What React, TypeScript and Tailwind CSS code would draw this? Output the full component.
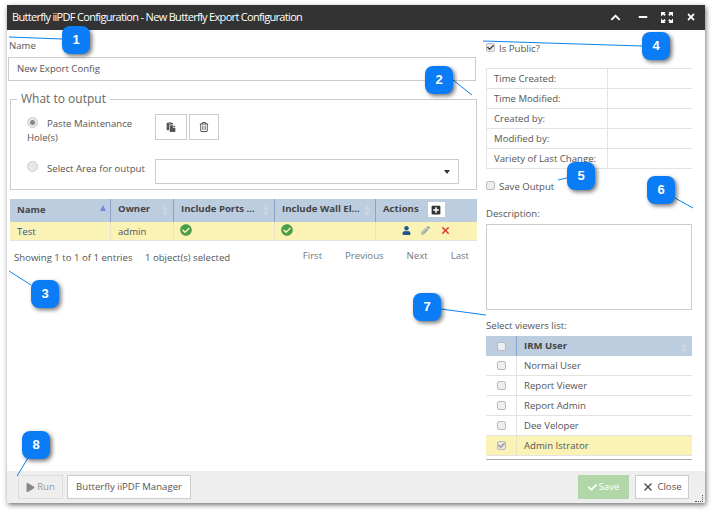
import { FaCheck, FaCheckCircle, FaChevronUp, FaMinus, FaPaste, FaPencilAlt, FaPlay, FaPlusSquare, FaTimes, FaUser } from "react-icons/fa";
import { FaRegTrashCan, FaXmark } from "react-icons/fa6";

const callouts = [
  { n: 1, cls: "left-[62px] top-[26px]" },
  { n: 2, cls: "left-[425px] top-[66px]" },
  { n: 3, cls: "left-[31px] top-[280px]" },
  { n: 4, cls: "left-[642px] top-[32px]" },
  { n: 5, cls: "left-[567px] top-[162px]" },
  { n: 6, cls: "left-[647px] top-[176px]" },
  { n: 7, cls: "left-[413px] top-[293px]" },
  { n: 8, cls: "left-[22px] top-[431px]" },
];

const leaders = [
  [9, 37, 62, 39],
  [453, 80, 472, 95],
  [9, 271, 31, 285],
  [483, 41, 642, 46],
  [558, 180, 567, 178],
  [675, 198, 693, 208],
  [441, 309, 486, 315],
  [17, 476, 28, 458],
];

function Check({ checked, dim }: { checked?: boolean; dim?: boolean }) {
  return (
    <span className={`flex h-[9px] w-[9px] shrink-0 items-center justify-center rounded-[2px] border border-[#bbb] ${dim ? "bg-[#e4e4e4]" : "bg-[#eee]"}`}>
      {checked && <FaCheck className={`text-[7px] ${dim ? "text-[#999]" : "text-[#444]"}`} />}
    </span>
  );
}

function Radio({ checked }: { checked?: boolean }) {
  return (
    <span className="flex h-[9px] w-[9px] box-content shrink-0 items-center justify-center rounded-full border border-[#ccc] bg-[#e8e8e8]">
      {checked && <span className="h-[5px] w-[5px] rounded-full bg-[#888]" />}
    </span>
  );
}

function SortArrows() {
  return (
    <span className="flex flex-col gap-[1px] pt-[2px]">
      <span className="h-0 w-0 border-x-[3px] border-b-[5px] border-x-transparent border-b-[#ccd5e0]" />
      <span className="h-0 w-0 border-x-[3px] border-t-[5px] border-x-transparent border-t-[#ccd5e0]" />
    </span>
  );
}

function HeadCell({ label, className }: { label: string; className: string }) {
  return (
    <div className={`flex items-center justify-between border-r border-[#8aa3c4] pb-[2px] pl-[7px] pr-[5px] font-bold text-[#444] ${className}`}>
      <span>{label}</span>
      <SortArrows />
    </div>
  );
}

function ExpandIcon() {
  return (
    <svg width="12" height="11" viewBox="0 0 12 11" fill="#fff">
      <path d="M0 0h4.5L3.4 1.2 4.8 2.6 3.4 4 2 2.6 1 3.6 0 4.5zM12 0H7.5l1.1 1.2L7.2 2.6 8.6 4 10 2.6l1 1 1 .9zM0 11h4.5L3.4 9.8l1.4-1.4L3.4 7 2 8.4l-1-1-1-.9zM12 11H7.5l1.1-1.2-1.4-1.4L8.6 7 10 8.4l1-1 1-.9z" />
    </svg>
  );
}

export default function App() {
  const info = ["Time Created:", "Time Modified:", "Created by:", "Modified by:", "Variety of Last Change:"];
  const viewers = ["Normal User", "Report Viewer", "Report Admin", "Dee Veloper"];

  return (
    <div className="relative h-[513px] w-[715px] overflow-hidden bg-white font-['Open_Sans',sans-serif] text-[9.6px] text-[#555]">
      <div className="ml-[7px] flex h-[498px] w-[698px] translate-y-[5px] flex-col bg-white shadow-[1px_2px_5px_rgba(0,0,0,0.55)]">
        <header className="flex h-[25px] shrink-0 items-center justify-between bg-[#333] pb-[1px] pl-[5px] pr-[9px] text-white">
          <span className="text-[11px] font-medium tracking-[-0.68px]">Butterfly iiPDF Configuration - New Butterfly Export Configuration</span>
          <div className="flex items-center gap-[13px] text-[10px]">
            <FaChevronUp className="mr-[4px] text-[11px]" />
            <FaMinus />
            <ExpandIcon />
            <FaTimes />
          </div>
        </header>

        <main className="flex min-h-0 flex-1">
          <section className="w-[479px] shrink-0 pl-[1px] pt-[9px]">
            <label className="mb-[5px] block pl-[1px] leading-[13px]">Name</label>
            <div className="flex h-[24px] w-[468px] items-center border border-[#ccc] pl-[8px]">New Export Config</div>

            <fieldset className="ml-[2px] mt-[9px] h-[100px] w-[467px] border border-[#ccc] pl-[16px]">
              <legend className="-ml-[10px] px-[4px] text-[12px] leading-[18px] text-[#666]">What to output</legend>
              <div className="flex h-[50px] gap-[8px] pt-[6px]">
                <div className="w-[120px] pt-[3px] leading-[14px]">
                  <div className="flex items-start gap-[9px]">
                    <Radio checked />
                    <span>Paste Maintenance</span>
                  </div>
                  <div>Hole(s)</div>
                </div>
                <div className="flex gap-[2px]">
                  <button className="flex h-[26px] w-[32px] items-center justify-center border border-[#ccc] text-[10px] text-[#555]">
                    <FaPaste />
                  </button>
                  <button className="flex h-[26px] w-[30px] items-center justify-center border border-[#ccc] text-[10px] text-[#555]">
                    <FaRegTrashCan />
                  </button>
                </div>
              </div>
              <div className="mt-[1px] flex items-start gap-[8px]">
                <div className="flex w-[120px] items-start gap-[9px] leading-[14px]">
                  <span className="pt-[2px]"><Radio /></span>
                  <span className="whitespace-nowrap pt-[3px]">Select Area for output</span>
                </div>
                <div className="flex h-[25px] w-[304px] items-center justify-end border border-[#ccc] pr-[8px]">
                  <span className="h-0 w-0 border-x-[3.5px] border-t-[4px] border-x-transparent border-t-[#333]" />
                </div>
              </div>
            </fieldset>

            <div className="ml-[2px] mt-[9px] w-[467px]">
              <div className="flex h-[23px] bg-[#bccde0]">
                <div className="flex w-[101px] justify-between border-r border-[#8aa3c4] pl-[7px] pr-[4px] pt-[3px] font-bold text-[#444]">
                  <span className="pt-[1px]">Name</span>
                  <span className="mt-[3px] h-0 w-0 border-x-[3.5px] border-b-[6px] border-x-transparent border-b-[#7b86d6]" />
                </div>
                <HeadCell label="Owner" className="w-[63px]" />
                <HeadCell label="Include Ports ..." className="w-[101px]" />
                <HeadCell label="Include Wall El..." className="w-[101px]" />
                <div className="flex flex-1 items-center gap-[9px] pb-[2px] pl-[7px] font-bold text-[#444]">
                  <span>Actions</span>
                  <span className="flex h-[15px] w-[17px] items-center justify-center bg-white text-[10px] text-[#333]">
                    <FaPlusSquare />
                  </span>
                </div>
              </div>
              <div className="flex h-[19px] items-center border-b border-[#e3e3e3] bg-[#fbf2b6]">
                <div className="h-full w-[101px] border-r border-[#e8e4c8] pl-[7px] pt-[1px] leading-[18px] text-[#1d5a8c]">Test</div>
                <div className="h-full w-[63px] border-r border-[#e8e4c8] pl-[7px] pt-[1px] leading-[18px]">admin</div>
                <div className="flex h-full w-[101px] items-center border-r border-[#e8e4c8] pb-[3px] pl-[6px] text-[12px] text-[#4a9d4a]">
                  <FaCheckCircle />
                </div>
                <div className="flex h-full w-[101px] items-center border-r border-[#e8e4c8] pb-[3px] pl-[6px] text-[12px] text-[#4a9d4a]">
                  <FaCheckCircle />
                </div>
                <div className="flex flex-1 items-center gap-[10px] pb-[1px] pl-[26px] text-[9px]">
                  <FaUser className="text-[#1d5a8c]" />
                  <FaPencilAlt className="text-[#9aa]" />
                  <FaXmark className="text-[11px] text-[#d9332a]" />
                </div>
              </div>
            </div>

            <div className="ml-[6px] mt-[8px] flex w-[455px] items-start justify-between">
              <div className="pt-[2px]">
                Showing 1 to 1 of 1 entries <span className="ml-[10px]">1 object(s) selected</span>
              </div>
              <div className="flex gap-[23px] text-[#777]">
                <span>First</span>
                <span>Previous</span>
                <span>Next</span>
                <span>Last</span>
              </div>
            </div>
          </section>

          <aside className="w-[206px] shrink-0 pt-[11px]">
            <div className="flex items-start gap-[4px] leading-[14px]">
              <span className="pt-[2px]"><Check checked /></span>
              <span className="pt-[1px]">Is Public?</span>
            </div>
            <div className="mt-[12px] border-l border-t border-[#e3e3e3]">
              {info.map((label) => (
                <div key={label} className="flex h-[20px] border-b border-[#e3e3e3]">
                  <div className="w-[121px] whitespace-nowrap border-r border-[#e3e3e3] pl-[7px] leading-[20px]">{label}</div>
                </div>
              ))}
            </div>
            <div className="mt-[10px] flex items-start gap-[4px] leading-[14px]">
              <span className="pt-[2px]"><Check /></span>
              <span className="pt-[1px]">Save Output</span>
            </div>
            <div className="mt-[13px] leading-[14px]">Description:</div>
            <div className="mt-[3px] h-[86px] border border-[#ccc]" />
            <div className="mt-[9px] leading-[14px]">Select viewers list:</div>
            <div className="mt-[3px]">
              <div className="flex h-[20px] bg-[#bccde0]">
                <div className="flex w-[31px] items-center justify-center border-r border-[#8aa3c4]">
                  <Check />
                </div>
                <div className="flex flex-1 items-center justify-between pl-[7px] pr-[5px] font-bold text-[#444]">
                  <span>IRM User</span>
                  <SortArrows />
                </div>
              </div>
              {viewers.map((name) => (
                <div key={name} className="flex h-[20px] border-b border-[#e3e3e3]">
                  <div className="flex w-[31px] items-center justify-center border-r border-[#e3e3e3]">
                    <Check />
                  </div>
                  <div className="pl-[7px] leading-[20px]">{name}</div>
                </div>
              ))}
              <div className="flex h-[20px] border-b border-[#e3e3e3] bg-[#fbf2b6]">
                <div className="flex w-[31px] items-center justify-center border-r border-[#e8e4c8]">
                  <Check checked dim />
                </div>
                <div className="pl-[7px] leading-[20px]">Admin Istrator</div>
              </div>
            </div>
            <div className="mt-[3px] border-t border-[#aaa]" />
          </aside>
        </main>

        <footer className="relative flex h-[32px] shrink-0 items-start justify-between bg-[#eee] pl-[11px] pr-[16px] pt-[4px]">
          <div className="flex gap-[4px]">
            <button className="flex h-[24px] w-[45px] items-center justify-center gap-[2px] border border-[#ddd] text-[#999]">
              <FaPlay className="text-[9px] text-[#888]" />
              Run
            </button>
            <button className="h-[24px] w-[124px] border border-[#ccc] bg-white text-[#555]">Butterfly iiPDF Manager</button>
          </div>
          <div className="flex gap-[6px]">
            <button className="flex h-[24px] w-[51px] items-center justify-center gap-[2px] bg-[#b1d7a9] text-white">
              <FaCheck className="text-[9px]" />
              Save
            </button>
            <button className="flex h-[24px] w-[54px] items-center justify-center gap-[3px] border border-[#ccc] bg-white text-[#555]">
              <FaXmark className="text-[12px]" />
              Close
            </button>
          </div>
          <span className="absolute bottom-[1px] right-[2px] h-[7px] w-[8px] border-b border-r border-dotted border-[#555]" />
        </footer>
      </div>

      <svg className="pointer-events-none absolute left-0 top-0" width="715" height="513">
        {leaders.map(([x1, y1, x2, y2]) => (
          <line key={`${x1}-${y1}`} x1={x1} y1={y1} x2={x2} y2={y2} stroke="#0a84f0" strokeWidth="1" />
        ))}
      </svg>
      {callouts.map((c) => (
        <div
          key={c.n}
          className={`absolute flex h-[28px] w-[28px] items-center justify-center rounded-[8px] bg-[#0a7cf5] font-['Liberation_Sans',sans-serif] text-[13px] font-bold text-white shadow-[2px_2px_4px_rgba(0,0,0,0.55)] ${c.cls}`}
        >
          {c.n}
        </div>
      ))}
    </div>
  );
}
